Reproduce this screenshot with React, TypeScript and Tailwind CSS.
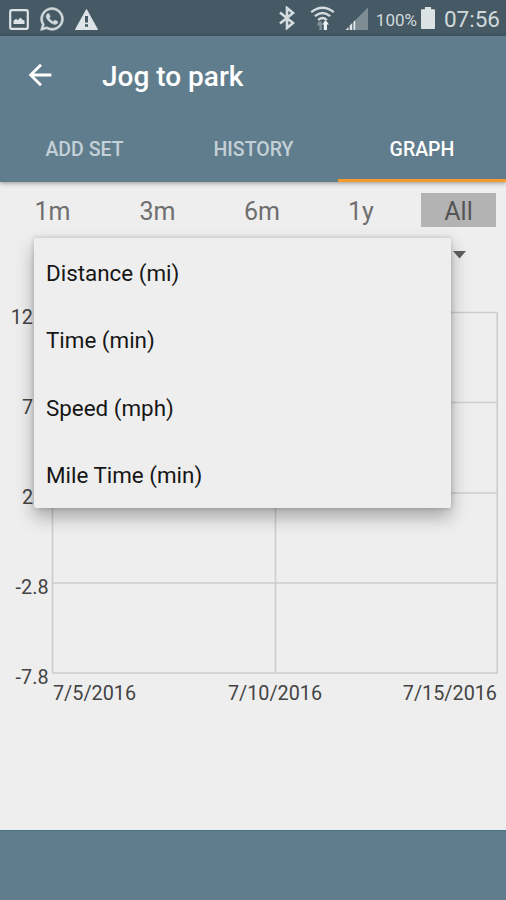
import React from "react";
import { MdArrowBack } from "react-icons/md";
import { FaWhatsapp } from "react-icons/fa";

const periods = [
  { label: "1m", cell: "w-[105px]" },
  { label: "3m", cell: "w-[105px]" },
  { label: "6m", cell: "w-[104px]" },
  { label: "1y", cell: "w-[94px]" },
  { label: "All", cell: "ml-[13px] w-[75px] bg-[#b3b3b3]", active: true },
];

const metrics = ["Distance (mi)", "Time (min)", "Speed (mph)", "Mile Time (min)"];

const rows = [
  { y: 312.5, x: 33, label: "12" },
  { y: 402.5, x: 33, label: "7" },
  { y: 493, x: 33, label: "2" },
  { y: 583, x: 48.5, label: "-2.8" },
  { y: 673, x: 48.5, label: "-7.8" },
];

const ImageIcon: React.FC = () => (
  <svg width="20" height="21" viewBox="0 0 20 21" className="shrink-0">
    <rect x="1.2" y="1.2" width="17.6" height="18.6" rx="1.5" fill="none" stroke="#dde3e6" strokeWidth="2.2" />
    <path d="M4.500 15v-3.200l2.600-2 1.800 1.400 2.400-2.600 2 2 2.200 1.200V15z" fill="#dde3e6" />
  </svg>
);

const WarningIcon: React.FC = () => (
  <svg width="23" height="21" viewBox="0 0 23 21" className="shrink-0">
    <path d="M11.5 0.500L22.500 20.500H0.500z" fill="#dde3e6" stroke="#dde3e6" strokeLinejoin="round" />
    <path d="M10 7h3v6.500h-3zM10 15.200h3v2.600h-3z" fill="#455a64" />
  </svg>
);

const BluetoothIcon: React.FC = () => (
  <svg width="18" height="24" viewBox="0 0 18 24" className="shrink-0">
    <path d="M2 6.500L15 17 9 22V2l6 5L2 17.500" fill="none" stroke="#d5dcdf" strokeWidth="2.6" />
  </svg>
);

const WifiIcon: React.FC = () => (
  <svg width="25" height="25" viewBox="0 0 25 25" className="shrink-0">
    <g fill="none" stroke="#d5dcdf" strokeWidth="2.3">
      <path d="M1.200 6.200Q12.500-2.800 23.800 6.200" />
      <path d="M4.800 10.200Q12.500 3.800 20.200 10.200" />
      <path d="M8.200 14Q12.500 10 16.800 14" />
    </g>
    <path d="M8.200 15.500h3.600V24H9.400v-4.400H7z" fill="#82929a" />
    <path d="M15.600 14l3.400 4.600h-2V24h-3.200v-5.400h-1.600z" fill="#eef1f2" />
  </svg>
);

const SignalIcon: React.FC = () => (
  <svg width="24" height="24" viewBox="0 0 24 24" className="shrink-0">
    <path d="M23 0.500V23H9.500V14z" fill="#7e8d94" />
    <path d="M0.500 23l3-3V23zM4.700 23v-4.400l2.600-2.600v7zM8.400 23V14.800l1.800-1.600V23z" fill="#e3e8ea" />
  </svg>
);

const BatteryIcon: React.FC = () => (
  <svg width="14" height="22" viewBox="0 0 15 23" preserveAspectRatio="none" className="shrink-0">
    <path d="M4.200 0h6.600v2.400H14a1 1 0 0 1 1 1V22a1 1 0 0 1-1 1H1a1 1 0 0 1-1-1V3.400a1 1 0 0 1 1-1h3.200z" fill="#dbe2e3" />
  </svg>
);

const StatusBar: React.FC = () => (
  <div className="flex h-9 items-center justify-between bg-[#455a64] pl-[9px] pr-[6px] text-[#d2d9dc]">
    <div className="flex items-center pt-[2px]">
      <ImageIcon />
      <FaWhatsapp size={26} className="ml-[10px] stroke-[#d2d9dc] stroke-[14]" />
      <span className="ml-[10px]">
        <WarningIcon />
      </span>
    </div>
    <div className="flex items-center">
      <BluetoothIcon />
      <span className="ml-[14px]">
        <WifiIcon />
      </span>
      <span className="ml-[10px] mt-[2px]">
        <SignalIcon />
      </span>
      <span className="ml-[7px] mt-[4px] text-[17px] leading-none">100%</span>
      <span className="ml-[4px]">
        <BatteryIcon />
      </span>
      <span className="ml-[9px] mt-[3px] text-[22.5px] leading-none">07:56</span>
    </div>
  </div>
);

const Header: React.FC = () => (
  <header className="relative z-10 h-[146px] bg-[#607d8d] shadow-[0_1px_5px_rgba(0,0,0,0.4)]">
    <div className="flex h-[81px] items-center pl-[23px] text-white">
      <MdArrowBack size={34} className="-mt-[3px]" />
      <h1 className="ml-[45px] mt-px text-[28px] font-medium leading-none">Jog to park</h1>
    </div>
    <nav className="grid h-[65px] grid-cols-[169px_169px_168px] text-[19.5px] font-medium leading-none text-[#c3d0d7]">
      <div className="pt-[23px] text-center">ADD SET</div>
      <div className="pt-[23px] text-center">HISTORY</div>
      <div className="border-b-[3px] border-[#f29b2a] pt-[23px] text-center text-white">GRAPH</div>
    </nav>
  </header>
);

const Chart: React.FC = () => (
  <svg width="506" height="412" viewBox="0 300 506 412" className="block" fontSize="19.8" fill="#444">
    <g stroke="#cdcdcd" strokeWidth="1.6">
      {rows.map((r) => (
        <line key={r.y} x1="52" x2="498" y1={r.y} y2={r.y} />
      ))}
      <line x1="52.500" x2="52.500" y1="312" y2="673" />
      <line x1="275.500" x2="275.500" y1="312" y2="673" />
      <line x1="497.200" x2="497.200" y1="312" y2="673" />
    </g>
    {rows.map((r) => (
      <text key={r.label} x={r.x} y={r.y + 11} textAnchor="end">
        {r.label}
      </text>
    ))}
    <text x="53" y="700">7/5/2016</text>
    <text x="275" y="700" textAnchor="middle">7/10/2016</text>
    <text x="497" y="700" textAnchor="end">7/15/2016</text>
  </svg>
);

const App: React.FC = () => (
  <div className="flex h-[900px] w-[506px] flex-col overflow-hidden bg-[#eeeeee] font-['Roboto',sans-serif]">
    <StatusBar />
    <Header />
    <main className="relative flex-1">
      <div className="flex pt-[11px] text-[25px] leading-none text-[#6e6e6e]">
        {periods.map((p) => (
          <div key={p.label} className={`flex h-[34px] items-center justify-center pt-[3px] ${p.cell} ${p.active ? "text-[#555]" : ""}`}>
            {p.label}
          </div>
        ))}
      </div>
      <div className="flex h-[73px] justify-end pr-[40px] pt-[24px]">
        <svg width="13" height="8" viewBox="0 0 13 8">
          <path d="M0 0h13L6.500 7.500z" fill="#5f5f5f" />
        </svg>
      </div>
      <Chart />

      <ul className="absolute left-[34px] top-[56px] h-[270px] w-[417px] rounded-[2px] bg-[#eeeeee] shadow-[0_9px_18px_rgba(0,0,0,0.3),0_0_5px_rgba(0,0,0,0.18)]">
        {metrics.map((m) => (
          <li key={m} className="flex h-[67.5px] items-center pl-[12px] pt-[2px] text-[22.4px] leading-none text-[#161616]">
            {m}
          </li>
        ))}
      </ul>
    </main>
    <footer className="h-[70px] border-t border-[#4b7080] bg-[#607d8d]" />
  </div>
);

export default App;
